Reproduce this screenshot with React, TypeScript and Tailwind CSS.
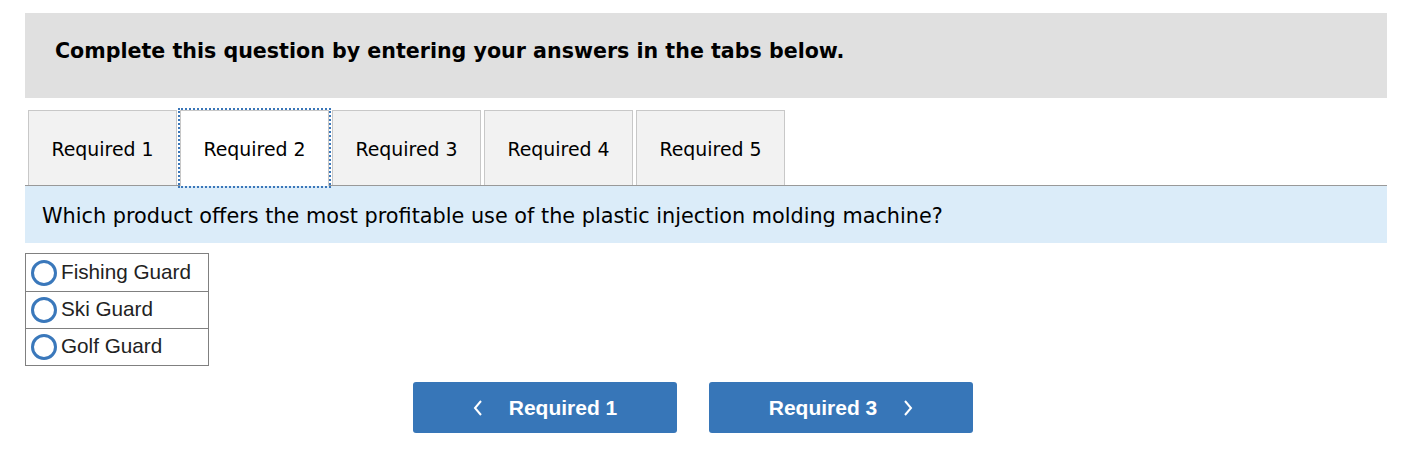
import React from 'react';

const tabs = ['Required 1', 'Required 2', 'Required 3', 'Required 4', 'Required 5'];
const options = ['Fishing Guard', 'Ski Guard', 'Golf Guard'];

const App: React.FC = () => {
  const active = 1;

  return (
    <div className="min-h-[450px] w-[1428px] bg-white pt-[13px] pl-[25px] font-['DejaVu_Sans',Verdana,sans-serif] text-black">
      <div className="w-[1362px]">
        {/* Header */}
        <div className="h-[85px] bg-[#e0e0e0] pl-[30px] pt-[26px]">
          <h2 className="text-[20.6px] font-bold leading-[24px]">
            Complete this question by entering your answers in the tabs below.
          </h2>
        </div>

        {/* Tabs */}
        <div className="mt-[12px] flex gap-[3px] border-b border-[#999] pl-[3px]">
          {tabs.map((t, i) => (
            <button
              key={t}
              className={`h-[75px] w-[149px] border border-b-0 border-[#c8c8c8] pt-[3px] text-[18.9px] ${
                i === active
                  ? 'relative -mb-px h-[76px] bg-white pb-[1px] outline-2 outline-offset-0 outline-dotted outline-[#3a76b8]'
                  : 'bg-[#f2f2f2]'
              }`}
            >
              {t}
            </button>
          ))}
        </div>

        {/* Question */}
        <div className="flex h-[57px] items-center bg-[#dbecf9] pl-[17px] pt-[5px] text-[20.8px]">
          Which product offers the most profitable use of the plastic injection molding machine?
        </div>

        {/* Options */}
        <div className="mt-[10px] w-[184px] border border-[#808080] font-['Liberation_Sans',Arial,sans-serif] text-[20.7px]">
          {options.map((o, i) => (
            <label
              key={o}
              className={`flex h-[37px] items-center pl-[5px] ${i > 0 ? 'border-t border-[#808080]' : ''}`}
            >
              <span className="mr-[4px] h-[26px] w-[26px] rounded-full border-[3px] border-[#3a78bb]" />
              <span className="-mt-[2px] text-[#222]">{o}</span>
            </label>
          ))}
        </div>

        {/* Nav buttons */}
        <div className="mt-[16px] flex justify-center gap-[32px] pr-[26px] font-['Liberation_Sans',Arial,sans-serif]">
          <button className="flex h-[51px] w-[264px] items-center justify-center gap-[26px] rounded-[3px] bg-[#3776b8] text-[21px] font-bold text-white">
            <svg width="10" height="16" viewBox="0 0 10 16" fill="none" stroke="white" strokeWidth="2">
              <path d="M8 1 L2 8 L8 15" />
            </svg>
            <span>Required 1</span>
          </button>
          <button className="flex h-[51px] w-[264px] items-center justify-center gap-[26px] rounded-[3px] bg-[#3776b8] text-[21px] font-bold text-white">
            <span>Required 3</span>
            <svg width="10" height="16" viewBox="0 0 10 16" fill="none" stroke="white" strokeWidth="2">
              <path d="M2 1 L8 8 L2 15" />
            </svg>
          </button>
        </div>
      </div>
    </div>
  );
};

export default App;
